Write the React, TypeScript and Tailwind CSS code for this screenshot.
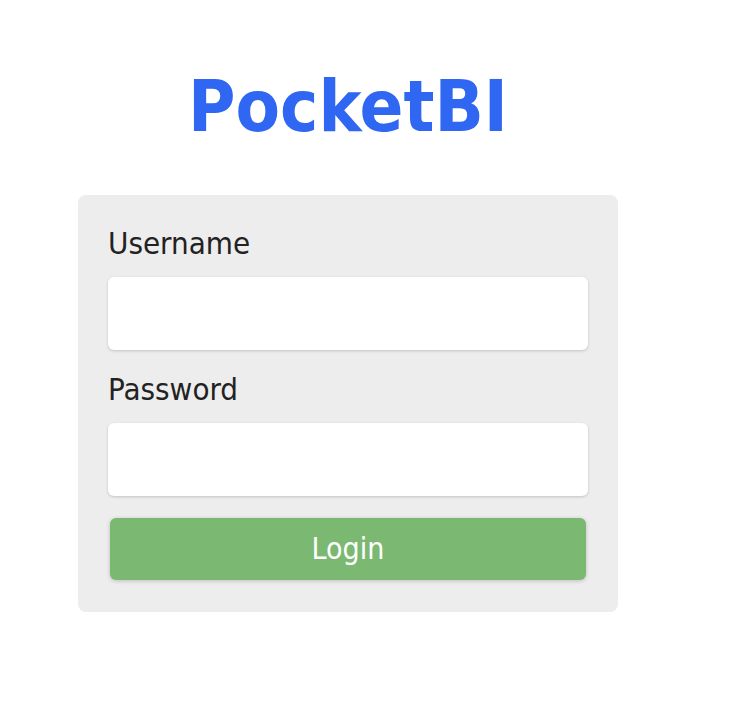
export default function App() {
  return (
    <div
      className="min-h-[714px] w-[740px] bg-white"
      style={{ fontFamily: '"DejaVu Sans Condensed", "DejaVu Sans", sans-serif' }}
    >
      <div className="ml-[78px] w-[540px] pt-[64px]">
        <h1
          className="text-center text-[72px] leading-[85px] font-bold text-[#2f66f2]"
          style={{ fontStretch: "condensed" }}
        >
          PocketBI
        </h1>

        <form
          className="mt-[46px] flex flex-col rounded-lg bg-[#ededed] px-[30px] pt-[30px] pb-[32px]"
          style={{ fontStretch: "condensed" }}
          onSubmit={(e) => e.preventDefault()}
        >
          <label className="text-[31px] leading-[36px] text-[#222]">Username</label>
          <input
            type="text"
            className="mt-4 h-[73px] w-full rounded-md bg-white shadow-[0_1px_3px_rgba(0,0,0,0.18)] outline-none"
          />

          <label className="mt-[21px] text-[31px] leading-[36px] text-[#222]">Password</label>
          <input
            type="password"
            className="mt-4 h-[73px] w-full rounded-md bg-white shadow-[0_1px_3px_rgba(0,0,0,0.18)] outline-none"
          />

          <button
            type="submit"
            className="mx-[2px] mt-[22px] h-[62px] rounded-md bg-[#7bb872] text-[30px] leading-none text-white shadow-[0_1px_4px_rgba(0,0,0,0.2)]"
          >
            Login
          </button>
        </form>
      </div>
    </div>
  );
}
